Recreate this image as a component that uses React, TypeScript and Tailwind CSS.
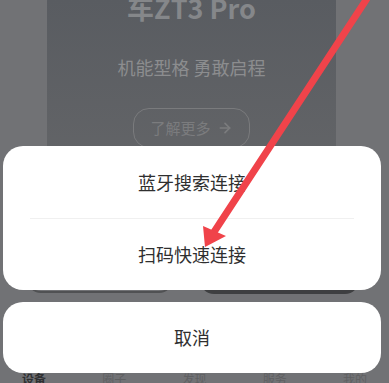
import { ArrowRight } from "lucide-react"

const tabs = ["设备", "圈子", "发现", "服务", "我的"]

function Background() {
  return (
    <div className="absolute inset-0 flex flex-col">
      <div className="ml-[47px] mr-[53px] h-[240px] bg-gradient-to-b from-[#595c61] to-[#67686a] flex flex-col items-center">
        <div className="-mt-[6px] text-[27px] leading-[28px] font-bold text-[#85878a]">车ZT3 Pro</div>
        <div className="mt-[34px] text-[18px] leading-[22px] text-[#8c8d8f]">机能型格 勇敢启程</div>
        <div className="mt-[30px] w-[117px] h-[40px] rounded-[16px] border border-[#7a7b7d] flex items-center justify-center gap-1.5 text-[15px] text-[#7b7c7e]">
          了解更多
          <ArrowRight className="w-4 h-4" strokeWidth={2.5} />
        </div>
      </div>
      <div className="mt-[13px] flex px-[27px] gap-[27px]">
        <div className="w-[146px] h-[40px] rounded-[14px] border-2 border-[#505153]" />
        <div className="w-[159px] h-[41px] rounded-[14px] bg-[#3e3f41]" />
      </div>
      <div className="mt-auto flex justify-between px-[22px] h-[10px] overflow-visible">
        {tabs.map((t, i) => (
          <span
            key={t}
            className={
              "text-[12px] leading-[14px] -mt-[1px] " +
              (i === 0 ? "text-[#2f3032] font-bold" : "text-[#5f6062]")
            }
          >
            {t}
          </span>
        ))}
      </div>
    </div>
  )
}

function Arrow() {
  return (
    <svg className="absolute inset-0 pointer-events-none" width="389" height="383" viewBox="0 0 389 383">
      <line x1="368" y1="-3" x2="214" y2="232" stroke="#f0434a" strokeWidth="7" strokeLinecap="round" />
      <polygon points="205,247 203,226 226,236" fill="#f0434a" />
    </svg>
  )
}

export default function App() {
  return (
    <div className="relative w-[389px] h-[383px] overflow-hidden bg-[#717275] font-['Noto_Sans_CJK_SC',sans-serif]">
      <Background />
      <div className="absolute left-[3px] right-[8px] top-[146px] flex flex-col">
        <div className="bg-white rounded-[20px] flex flex-col">
          <div className="h-[72px] flex items-center justify-center text-[18px] text-[#2f2f2f]">蓝牙搜索连接</div>
          <div className="mx-[27px] h-px bg-[#f0f0f0]" />
          <div className="h-[71px] flex items-center justify-center text-[18px] text-[#2f2f2f]">扫码快速连接</div>
        </div>
        <div className="mt-[12px] h-[71px] bg-white rounded-[20px] flex items-center justify-center text-[18px] text-[#2f2f2f]">
          取消
        </div>
      </div>
      <Arrow />
    </div>
  )
}
